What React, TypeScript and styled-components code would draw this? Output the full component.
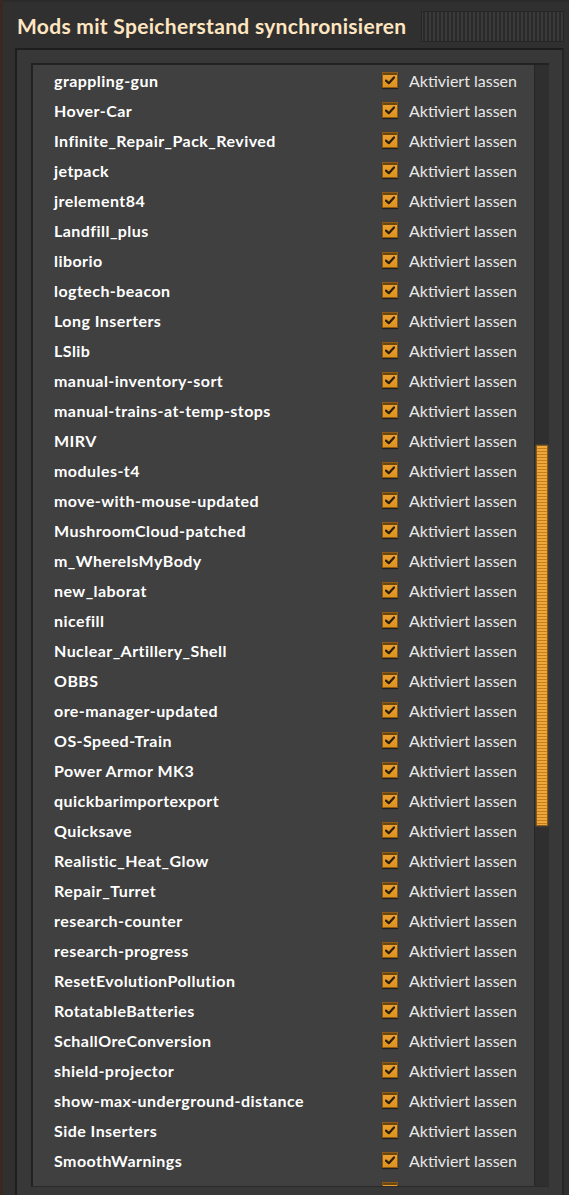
import styled, { createGlobalStyle } from "styled-components";

const GlobalStyle = createGlobalStyle`
  html, body {
    margin: 0;
    padding: 0;
    background: #3a2820;
    overflow: hidden;
  }
`;

const mods = [
  "grappling-gun",
  "Hover-Car",
  "Infinite_Repair_Pack_Revived",
  "jetpack",
  "jrelement84",
  "Landfill_plus",
  "liborio",
  "logtech-beacon",
  "Long Inserters",
  "LSlib",
  "manual-inventory-sort",
  "manual-trains-at-temp-stops",
  "MIRV",
  "modules-t4",
  "move-with-mouse-updated",
  "MushroomCloud-patched",
  "m_WhereIsMyBody",
  "new_laborat",
  "nicefill",
  "Nuclear_Artillery_Shell",
  "OBBS",
  "ore-manager-updated",
  "OS-Speed-Train",
  "Power Armor MK3",
  "quickbarimportexport",
  "Quicksave",
  "Realistic_Heat_Glow",
  "Repair_Turret",
  "research-counter",
  "research-progress",
  "ResetEvolutionPollution",
  "RotatableBatteries",
  "SchallOreConversion",
  "shield-projector",
  "show-max-underground-distance",
  "Side Inserters",
  "SmoothWarnings",
  "Squeak Through",
];

const Window = styled.div`
  margin-left: 3px;
  height: 1195px;
  box-sizing: border-box;
  padding: 0 5px 0 12px;
  background: #313031;
  border-top: 2px solid #2a2a2a;
  font-family: Lato, "Liberation Sans", sans-serif;
`;

const TitleBar = styled.div`
  display: flex;
  align-items: center;
  height: 46px;
`;

const Title = styled.h1`
  margin: 0 0 0 2px;
  font-size: 21px;
  font-weight: 700;
  color: #ffe6c0;
  white-space: nowrap;
  letter-spacing: 0.3px;
`;

const DragHandle = styled.div`
  flex: 1;
  height: 31px;
  margin-left: 15px;
  margin-top: 3px;
  background: repeating-linear-gradient(
    90deg,
    #3a3a3a 0 2px,
    #2a2a2a 2px 4px
  );
  box-shadow: inset 0 0 0 1px #262626;
`;

const DeepFrame = styled.div`
  box-sizing: border-box;
  height: calc(100% - 46px);
  padding: 13px 13px 12px 14px;
  background: #383838;
  border-top: 2px solid #1e1e1e;
  border-left: 2px solid #1e1e1e;
  border-right: 2px solid #262626;
`;

const ScrollPane = styled.div`
  display: flex;
  height: 1124px;
  border-top: 2px solid #222;
  border-left: 2px solid #222;
  border-bottom: 1px solid #2a2a2a;
  box-sizing: border-box;
`;

const List = styled.div`
  flex: 1;
  overflow: hidden;
  background: #404040;
`;

const Row = styled.div`
  display: grid;
  grid-template-columns: 328px 16px 1fr;
  align-items: center;
  height: 30px;
  padding-left: 21px;
`;

const ModName = styled.span`
  font-size: 16px;
  font-weight: 700;
  color: #ffffff;
  white-space: nowrap;
  letter-spacing: 0.45px;
`;

const Check = styled.span`
  display: flex;
  align-items: center;
  justify-content: center;
  width: 16px;
  height: 16px;
  box-sizing: border-box;
  background: linear-gradient(#eba235, #dc921f);
  border: 1px solid #8c5a14;
  box-shadow: inset 0 2px 0 #6b4510, 0 1px 1px rgba(0, 0, 0, 0.5);
`;

const Label = styled.span`
  margin-left: 11px;
  font-size: 16px;
  color: #e8e8e8;
  white-space: nowrap;
`;

const Track = styled.div`
  width: 15px;
  background: #2f2f2f;
  border-left: 1px solid #262626;
  box-sizing: border-box;
  padding: 380px 1px 0 1px;
`;

const Thumb = styled.div`
  height: 381px;
  box-sizing: border-box;
  border: 1px solid #8a5a1c;
  background: repeating-linear-gradient(
    180deg,
    #f0a83a 0 2px,
    #c57e1c 2px 3px
  );
  box-shadow: 0 0 2px rgba(255, 180, 80, 0.35);
`;

function CheckMark() {
  return (
    <svg width="10" height="9" viewBox="0 0 10 9">
      <path
        d="M1 4.6 L3.8 7.2 L9 1.4"
        fill="none"
        stroke="#2b1e0c"
        strokeWidth="2.2"
        strokeLinecap="round"
        strokeLinejoin="round"
      />
    </svg>
  );
}

export default function App() {
  return (
    <>
      <GlobalStyle />
      <Window>
        <TitleBar>
          <Title>Mods mit Speicherstand synchronisieren</Title>
          <DragHandle />
        </TitleBar>
        <DeepFrame>
          <ScrollPane>
            <List>
              {mods.map((name) => (
                <Row key={name}>
                  <ModName>{name}</ModName>
                  <Check>
                    <CheckMark />
                  </Check>
                  <Label>Aktiviert lassen</Label>
                </Row>
              ))}
            </List>
            <Track>
              <Thumb />
            </Track>
          </ScrollPane>
        </DeepFrame>
      </Window>
    </>
  );
}
